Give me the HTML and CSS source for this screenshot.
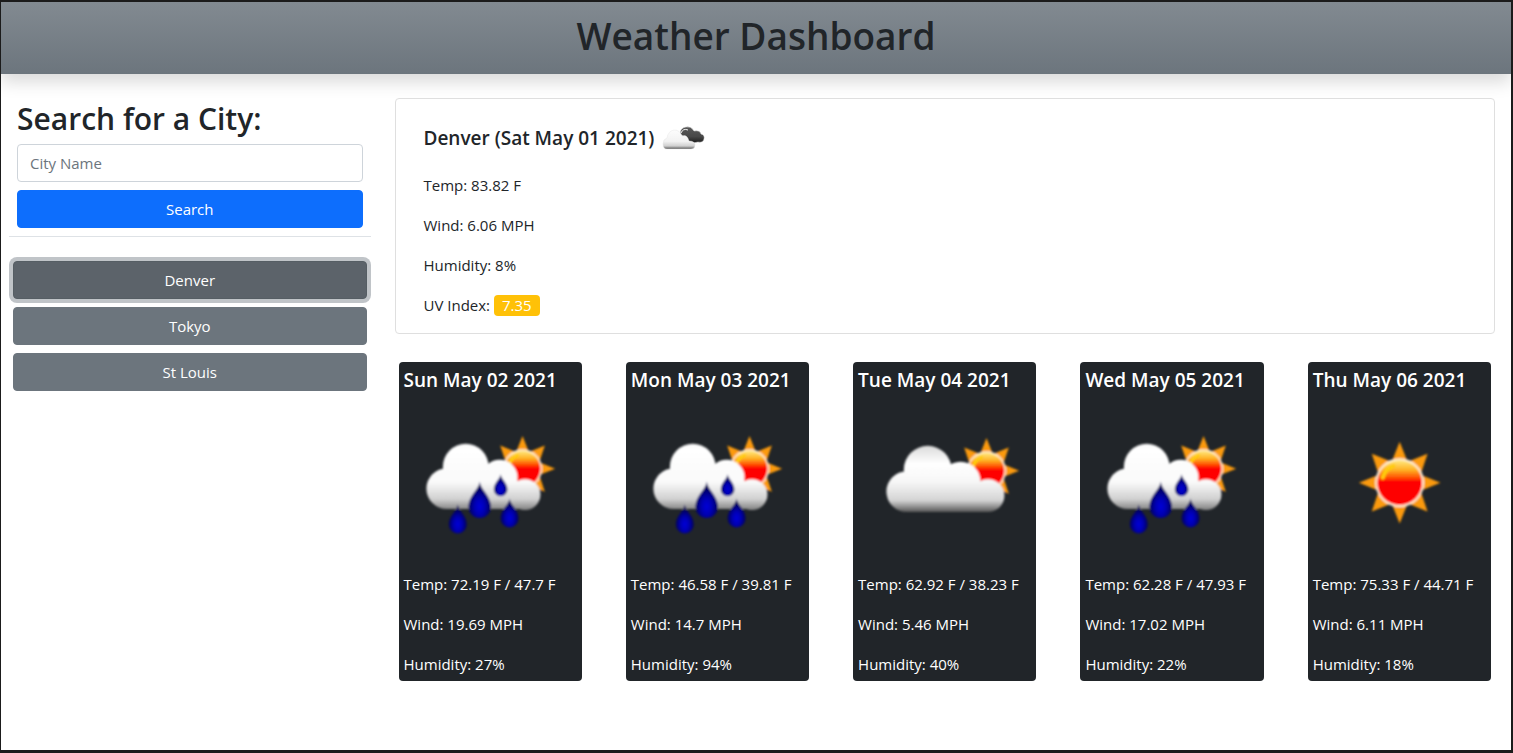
FILE: index.html
```html
<!DOCTYPE html>
<html lang="en">
<head>
<meta charset="utf-8">
<meta name="viewport" content="width=device-width, initial-scale=1">
<title>Weather Dashboard</title>
<link rel="stylesheet" href="styles.css">
</head>
<body>
<svg class="defs" aria-hidden="true">
  <defs>
    <linearGradient id="sunFill" x1="0" y1="0" x2="0" y2="1">
      <stop offset="0.04" stop-color="#ffe070"/>
      <stop offset="0.22" stop-color="#ffb020"/>
      <stop offset="0.4" stop-color="#ff4800"/>
      <stop offset="0.48" stop-color="#fe0000"/>
    </linearGradient>
    <linearGradient id="cloudFill" gradientUnits="userSpaceOnUse" x1="0" y1="47" x2="0" y2="115">
      <stop offset="0" stop-color="#d8d8d8"/>
      <stop offset="0.28" stop-color="#ffffff"/>
      <stop offset="0.55" stop-color="#f6f6f6"/>
      <stop offset="0.82" stop-color="#d4d4d4"/>
      <stop offset="0.92" stop-color="#8c8c8c"/>
      <stop offset="1" stop-color="#505050"/>
    </linearGradient>
    <linearGradient id="rainCloudFill" gradientUnits="userSpaceOnUse" x1="0" y1="44" x2="0" y2="111">
      <stop offset="0" stop-color="#f4f4f4"/>
      <stop offset="0.1" stop-color="#ffffff"/>
      <stop offset="0.6" stop-color="#fafafa"/>
      <stop offset="0.86" stop-color="#d0d0d0"/>
      <stop offset="1" stop-color="#8a8a8a"/>
    </linearGradient>
    <radialGradient id="dropFill" cx="0.5" cy="0.68" r="0.5">
      <stop offset="0" stop-color="#0000d8"/>
      <stop offset="0.45" stop-color="#0000b4"/>
      <stop offset="1" stop-color="#00005c"/>
    </radialGradient>
    <linearGradient id="smallCloudFill" x1="0" y1="0" x2="0" y2="1">
      <stop offset="0" stop-color="#fdfdfd"/>
      <stop offset="0.6" stop-color="#f2f2f2"/>
      <stop offset="0.84" stop-color="#d0d0d0"/>
      <stop offset="1" stop-color="#5c5c5c"/>
    </linearGradient>
    <linearGradient id="darkCloudFill" x1="0" y1="0" x2="0" y2="1">
      <stop offset="0" stop-color="#5a5a5a"/>
      <stop offset="0.6" stop-color="#484848"/>
      <stop offset="1" stop-color="#1c1c1c"/>
    </linearGradient>
    <filter id="soft" x="-5%" y="-5%" width="110%" height="110%"><feGaussianBlur stdDeviation="0.9"/></filter>
    <g id="sun">
      <path fill="#fb9a0c" d="M0-41L8-21L28-29L21-8L41 0L21 8L28 29L8 21L0 41L-8 21L-28 29L-21 8L-41 0L-21-8L-28-29L-8-21Z"/>
      <circle r="24.500" fill="#fff0d8"/>
      <circle r="22.500" fill="url(#sunFill)"/>
      <path d="M-17-5Q-14-14-6-17" fill="none" stroke="#ffcc10" stroke-width="4" stroke-linecap="round"/>
    </g>
    <path id="drop" d="M0-19C1-12 9-8 9 1A9 9 0 0 1-9 1C-9-8-1-12 0-19Z" fill="url(#dropFill)"/>
    <g id="sunCloud" filter="url(#soft)">
      <use href="#sun" transform="translate(129 73) scale(.8)"/>
      <g fill="url(#cloudFill)">
        <circle cx="70" cy="72" r="24"/>
        <circle cx="49" cy="94" r="20.500"/>
        <circle cx="103" cy="84" r="20"/>
        <circle cx="130.500" cy="98" r="16.500"/>
        <path d="M49 74H104L131 90V114.500H49Z"/>
      </g>
    </g>
    <g id="rainSun" filter="url(#soft)">
      <use href="#sun" transform="translate(119 71) scale(.8)"/>
      <g fill="url(#rainCloudFill)">
        <circle cx="62" cy="69" r="23"/>
        <circle cx="43" cy="91" r="20.500"/>
        <circle cx="96" cy="80" r="18"/>
        <circle cx="121.500" cy="97" r="15.500"/>
        <path d="M43 71H96L121 88V111.500H43Z"/>
      </g>
      <use href="#drop" transform="translate(54 126)"/>
      <use href="#drop" transform="translate(76 108) scale(1.260)"/>
      <use href="#drop" transform="translate(97 91) scale(.760)"/>
      <use href="#drop" transform="translate(106 120)"/>
    </g>
    <g id="clearSun" filter="url(#soft)"><use href="#sun" transform="translate(87 85)"/></g>
  </defs>
</svg>

<header class="banner"><h1 class="banner-title">Weather Dashboard</h1></header>

<div class="layout">
  <aside class="sidebar">
    <form class="search">
      <h2 class="search-title"><label for="city">Search for a City:</label></h2>
      <input class="search-input" id="city" type="text" placeholder="City Name">
      <button class="btn btn-primary" type="button">Search</button>
    </form>
    <div class="history">
      <button class="btn btn-secondary is-active" type="button">Denver</button>
      <button class="btn btn-secondary" type="button">Tokyo</button>
      <button class="btn btn-secondary" type="button">St Louis</button>
    </div>
  </aside>

  <main class="main">
    <section class="current">
      <h3 class="current-title">Denver (Sat May 01 2021)
        <svg class="current-icon" viewBox="0 0 50 50" role="img" aria-label="Broken clouds">
          <path fill="url(#darkCloudFill)" stroke="#d8d8d8" stroke-width=".5" d="M22 21Q22 15 28 14Q33 13 36 18Q42 17 43 21Q47 22 46 26Q45 30 40 29L35 30Q31 30 29 26Z"/>
          <path d="M23 20Q25 15 30 17" fill="none" stroke="#f4f4f4"/>
          <path fill="url(#smallCloudFill)" stroke="#e4e4e4" stroke-width=".4" d="M9 36Q5 36 5 31Q5 26 9 25Q10 18 16 17Q22 17 24 23Q29 21 31 28Q37 28 37 32Q37 36 33 36Z"/>
        </svg>
      </h3>
      <p class="reading">Temp: 83.82 F</p>
      <p class="reading">Wind: 6.06 MPH</p>
      <p class="reading">Humidity: 8%</p>
      <p class="reading">UV Index: <span class="badge">7.35</span></p>
    </section>

    <section class="forecast">
      <article class="day">
        <h4 class="day-title">Sun May 02 2021</h4>
        <svg class="day-icon" viewBox="0 0 175 175" role="img" aria-label="Rain"><use href="#rainSun"/></svg>
        <p class="reading">Temp: 72.19 F / 47.7 F</p>
        <p class="reading">Wind: 19.69 MPH</p>
        <p class="reading">Humidity: 27%</p>
      </article>
      <article class="day">
        <h4 class="day-title">Mon May 03 2021</h4>
        <svg class="day-icon" viewBox="0 0 175 175" role="img" aria-label="Rain"><use href="#rainSun"/></svg>
        <p class="reading">Temp: 46.58 F / 39.81 F</p>
        <p class="reading">Wind: 14.7 MPH</p>
        <p class="reading">Humidity: 94%</p>
      </article>
      <article class="day">
        <h4 class="day-title">Tue May 04 2021</h4>
        <svg class="day-icon" viewBox="0 0 175 175" role="img" aria-label="Few clouds"><use href="#sunCloud"/></svg>
        <p class="reading">Temp: 62.92 F / 38.23 F</p>
        <p class="reading">Wind: 5.46 MPH</p>
        <p class="reading">Humidity: 40%</p>
      </article>
      <article class="day">
        <h4 class="day-title">Wed May 05 2021</h4>
        <svg class="day-icon" viewBox="0 0 175 175" role="img" aria-label="Rain"><use href="#rainSun"/></svg>
        <p class="reading">Temp: 62.28 F / 47.93 F</p>
        <p class="reading">Wind: 17.02 MPH</p>
        <p class="reading">Humidity: 22%</p>
      </article>
      <article class="day">
        <h4 class="day-title">Thu May 06 2021</h4>
        <svg class="day-icon" viewBox="0 0 175 175" role="img" aria-label="Clear sky"><use href="#clearSun"/></svg>
        <p class="reading">Temp: 75.33 F / 44.71 F</p>
        <p class="reading">Wind: 6.11 MPH</p>
        <p class="reading">Humidity: 18%</p>
      </article>
    </section>
  </main>
</div>
</body>
</html>
```
FILE: styles.css
```css
*,
*::before,
*::after {
  box-sizing: border-box;
}

body {
  margin: 0;
  min-height: 100vh;
  border: solid #1b1b1b;
  border-width: 2px 2px 3px 1px;
  background: #fff;
  color: #212529;
  font: 400 15px/24px "Open Sans", "Noto Sans", sans-serif;
}

h1, h2, h3, h4, p {
  margin: 0;
}

.defs {
  position: absolute;
  width: 0;
  height: 0;
}

.banner {
  padding: 10px 8px 14px;
  background: linear-gradient(#828a91, #6c757d);
  box-shadow: 0 8px 16px rgba(0, 0, 0, 0.15);
}

.banner-title {
  font-size: 37px;
  font-weight: 600;
  line-height: 48px;
  text-align: center;
}

.layout {
  display: grid;
  grid-template-columns: 1fr 3fr;
  padding-top: 24px;
}

.sidebar {
  padding: 0 8px;
}

.search {
  display: flex;
  flex-direction: column;
  gap: 8px;
  padding: 0 8px 8px;
  border-bottom: 1px solid #dee2e6;
}

.search-title {
  padding-top: 4px;
  font-size: 30px;
  font-weight: 600;
  line-height: 34px;
}

.search-input {
  width: 100%;
  height: 38px;
  padding: 0 12px;
  border: 1px solid #ced4da;
  border-radius: 4px;
  background: #fff;
  color: #212529;
  font: inherit;
}

.search-input::placeholder {
  color: #6c757d;
  opacity: 1;
}

.btn {
  height: 38px;
  border: 1px solid transparent;
  border-radius: 4px;
  color: #fff;
  font: inherit;
  cursor: pointer;
}

.btn-primary {
  border-color: #0d6efd;
  background: #0d6efd;
}

.btn-secondary {
  border-color: #6c757d;
  background: #6c757d;
}

.btn-secondary.is-active {
  border-color: #565e64;
  background: #5c636a;
  box-shadow: 0 0 0 4px #c0c4c8;
}

.history {
  display: grid;
  gap: 8px;
  padding: 24px 4px;
}

.main {
  padding: 0 16px;
}

.current {
  padding: 14px 28px 16px;
  border: 1px solid #dfdfdf;
  border-radius: 4px;
}

.current-title {
  display: flex;
  align-items: center;
  gap: 4px;
  margin-bottom: 10px;
  font-size: 19px;
  font-weight: 600;
}

.current-icon {
  width: 50px;
  height: 50px;
}

.reading + .reading {
  margin-top: 16px;
}

.badge {
  display: inline-block;
  padding: 0 8px;
  border-radius: 4px;
  background: #ffc107;
  color: #fff;
  line-height: 21px;
}

.forecast {
  display: grid;
  grid-template-columns: repeat(5, 1fr);
  gap: 44px;
  padding: 28px 4px;
}

.day {
  padding: 6px 4px 5px 5px;
  border-radius: 4px;
  background: #212529;
  color: #fff;
}

.day-title {
  margin-bottom: 6px;
  font-size: 19px;
  font-weight: 600;
}

.day-icon {
  display: block;
  width: 100%;
}
```
